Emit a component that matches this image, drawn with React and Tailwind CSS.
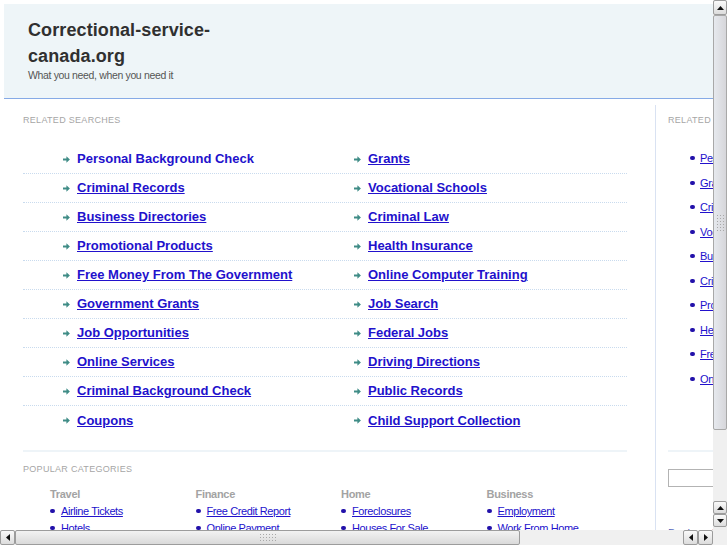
import React from 'react';

const related = [
  ['Personal Background Check', 'Grants'],
  ['Criminal Records', 'Vocational Schools'],
  ['Business Directories', 'Criminal Law'],
  ['Promotional Products', 'Health Insurance'],
  ['Free Money From The Government', 'Online Computer Training'],
  ['Government Grants', 'Job Search'],
  ['Job Opportunities', 'Federal Jobs'],
  ['Online Services', 'Driving Directions'],
  ['Criminal Background Check', 'Public Records'],
  ['Coupons', 'Child Support Collection'],
];

const sideLinks = [
  'Personal Background Check',
  'Grants',
  'Criminal Records',
  'Vocational Schools',
  'Business Directories',
  'Criminal Law',
  'Promotional Products',
  'Health Insurance',
  'Free Money From The Government',
  'Online Computer Training',
];

const categories = [
  { title: 'Travel', items: ['Airline Tickets', 'Hotels', 'Car Rental'] },
  { title: 'Finance', items: ['Free Credit Report', 'Online Payment', 'Credit Card Application'] },
  { title: 'Home', items: ['Foreclosures', 'Houses For Sale', 'Mortgage'] },
  { title: 'Business', items: ['Employment', 'Work From Home', 'Small Business'] },
];

function Arrow() {
  return (
    <svg width="7" height="7" viewBox="0 0 7 7" className="shrink-0 mr-[7px]">
      <path d="M0 2.6h3.4V0.2L6.9 3.5 3.4 6.8V4.4H0z" fill="#3f8c86" />
    </svg>
  );
}

function Tri({ dir }) {
  const d = {
    up: 'M0 4L3.5 0 7 4z',
    down: 'M0 0L7 0 3.5 4z',
    left: 'M4 0L4 7 0 3.5z',
    right: 'M0 0L4 3.5 0 7z',
  }[dir];
  const horiz = dir === 'left' || dir === 'right';
  return (
    <svg width={horiz ? 4 : 7} height={horiz ? 7 : 4} viewBox={horiz ? '0 0 4 7' : '0 0 7 4'}>
      <path d={d} fill="#111" />
    </svg>
  );
}

function Grip({ vertical }) {
  const dots = [];
  for (let r = 0; r < (vertical ? 6 : 3); r++) {
    for (let c = 0; c < (vertical ? 3 : 6); c++) {
      dots.push(<span key={`${r}-${c}`} className="w-[1px] h-[1px] bg-[#a8a8a8]" />);
    }
  }
  return (
    <div className={`grid gap-[2px] ${vertical ? 'grid-cols-3' : 'grid-cols-6'}`}>{dots}</div>
  );
}

function SbButton({ dir, className = '' }) {
  return (
    <div
      className={`flex items-center justify-center border border-[#9c9c9c] rounded-[2px] bg-gradient-to-b from-[#fafafa] to-[#dcdcdc] ${className}`}
    >
      <Tri dir={dir} />
    </div>
  );
}

export default function App() {
  return (
    <div className="w-[727px] h-[545px] flex flex-col overflow-hidden bg-white font-['Liberation_Sans',Arial,sans-serif]">
      <div className="flex h-[530px]">
        {/* page viewport */}
        <div className="w-[713px] overflow-hidden">
          <div className="w-[1000px] pt-[4px] pl-[4px]">
            {/* ═══ HEADER ═══ */}
            <header className="h-[95px] bg-[#eef5f8] border-b border-[#86aae6] pl-[24px] pt-[13px]">
              <h1 className="w-[220px] text-[18px] leading-[26px] font-bold tracking-[0.1px] text-[#303030]">
                Correctional-service-canada.org
              </h1>
              <p className="text-[10.5px] leading-[12px] tracking-[-0.35px] text-[#555]">
                What you need, when you need it
              </p>
            </header>

            <div className="flex pt-[6px]">
              {/* ═══ MAIN COLUMN ═══ */}
              <div className="w-[652px] shrink-0 border-r border-[#d9e2f2] pl-[19px] pt-[9px] h-[440px]">
                <p className="text-[9px] leading-[12px] tracking-[0.3px] text-[#a6a6a6] uppercase">Related Searches</p>

                <div className="w-[604px] mt-[19px]">
                  {related.map((row, i) => (
                    <div
                      key={i}
                      className={`h-[29px] flex items-center pl-[40px] ${i < related.length - 1 ? 'border-b border-dotted border-[#c9dbee]' : ''}`}
                    >
                      {row.map((t, j) => (
                        <div key={j} className={`flex items-center ${j === 0 ? 'w-[291px]' : ''}`}>
                          <Arrow />
                          <a
                            href="#"
                            className={`text-[13px] font-bold text-[#2211cc] ${i === 0 && j === 0 ? 'no-underline' : 'underline'}`}
                          >
                            {t}
                          </a>
                        </div>
                      ))}
                    </div>
                  ))}
                </div>

                <div className="w-[604px] h-[2px] bg-[#eef4f8] mt-[15px]" />

                <p className="mt-[11px] text-[9px] leading-[12px] tracking-[0.3px] text-[#a6a6a6] uppercase">Popular Categories</p>

                <div className="flex pl-[27px] mt-[13px]">
                  {categories.map((cat) => (
                    <div key={cat.title} className="w-[145.5px]">
                      <p className="text-[11px] leading-[13px] font-bold tracking-[-0.3px] text-[#a3a3a3]">{cat.title}</p>
                      <ul className="mt-[2px]">
                        {cat.items.map((it) => (
                          <li key={it} className="h-[16.5px] flex items-center">
                            <span className="w-[5px] h-[4px] rounded-full bg-[#2211aa] mr-[6px]" />
                            <a href="#" className="text-[11px] tracking-[-0.4px] text-[#2211cc] underline">{it}</a>
                          </li>
                        ))}
                      </ul>
                    </div>
                  ))}
                </div>
              </div>

              {/* ═══ SIDE COLUMN ═══ */}
              <div className="pl-[12px] pt-[9px] w-[300px]">
                <p className="text-[9px] leading-[12px] tracking-[0.3px] text-[#a6a6a6] uppercase">Related Searches</p>
                <ul className="mt-[20px] pl-[22px]">
                  {sideLinks.map((t) => (
                    <li key={t} className="h-[24.5px] flex items-center">
                      <span className="w-[5px] h-[4px] rounded-full bg-[#2211aa] mr-[5px]" />
                      <a href="#" className="text-[11px] tracking-[-0.3px] text-[#2211cc] underline">{t}</a>
                    </li>
                  ))}
                </ul>
                <div className="h-[2px] bg-[#eef4f8] mt-[59px] w-[250px]" />
                <input className="mt-[17px] w-[150px] h-[18px] border border-[#b3b3b3] bg-white" />
                <p className="mt-[35px] text-[11px] text-[#5566bb]">Bookmark this page</p>
              </div>
            </div>
          </div>
        </div>

        {/* vertical scrollbar */}
        <div className="w-[14px] flex flex-col bg-[#ededed]">
          <SbButton dir="up" className="h-[15px]" />
          <div className="h-[415px] border border-[#a8a8a8] rounded-[2px] bg-gradient-to-r from-[#e6e9ee] to-[#d6d6da] flex items-center justify-center">
            <Grip vertical />
          </div>
          <div className="flex-1 bg-[#f0f0f0]" />
          <SbButton dir="up" className="h-[13px]" />
          <SbButton dir="down" className="h-[13px]" />
          <div className="h-[3px]" />
        </div>
      </div>

      {/* horizontal scrollbar */}
      <div className="h-[15px] flex bg-[#efefef]">
        <SbButton dir="left" className="w-[15px]" />
        <div className="w-[505px] border border-[#9c9c9c] rounded-[2px] bg-gradient-to-b from-[#f2f2f2] to-[#dadada] flex items-center justify-center">
          <Grip />
        </div>
        <div className="flex-1 bg-[#f0f0f0]" />
        <SbButton dir="left" className="w-[15px]" />
        <SbButton dir="right" className="w-[15px]" />
        <div className="w-[14px] bg-[#f0f0f0]" />
      </div>
    </div>
  );
}
